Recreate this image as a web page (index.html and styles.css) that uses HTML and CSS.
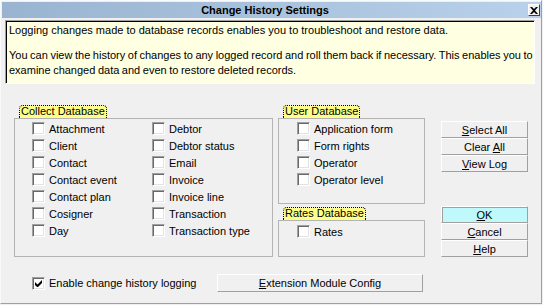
FILE: index.html
```html
<!DOCTYPE html>
<html lang="en">
<head>
    <meta charset="UTF-8">
    <title>Change History Settings</title>
    <link rel="stylesheet" href="styles.css">
</head>
<body>
<div class="window">
    <div class="titlebar">
        <span class="title">Change History Settings</span>
        <span class="close-btn">
            <svg width="8" height="7" viewBox="0 0 8 7">
                <path d="M0 0h2l2 2 2-2h2L5 3.5 8 7H6L4 5 2 7H0l3-3.5z" fill="#000"/>
            </svg>
        </span>
    </div>

    <div class="info">
        <p>Logging changes made to database records enables you to troubleshoot and restore data.</p>
        <p class="tight">You can view the history of changes to any logged record and roll them back if necessary. This enables you to<br>examine changed data and even to restore deleted records.</p>
    </div>

    <div class="main">
        <div class="group">
            <span class="group-tab">Collect Database</span>
            <div class="group-box box-collect">
                <label class="chk"><span class="box"></span>Attachment</label>
                <label class="chk"><span class="box"></span>Client</label>
                <label class="chk"><span class="box"></span>Contact</label>
                <label class="chk"><span class="box"></span>Contact event</label>
                <label class="chk"><span class="box"></span>Contact plan</label>
                <label class="chk"><span class="box"></span>Cosigner</label>
                <label class="chk"><span class="box"></span>Day</label>
                <label class="chk"><span class="box"></span>Debtor</label>
                <label class="chk"><span class="box"></span>Debtor status</label>
                <label class="chk"><span class="box"></span>Email</label>
                <label class="chk"><span class="box"></span>Invoice</label>
                <label class="chk"><span class="box"></span>Invoice line</label>
                <label class="chk"><span class="box"></span>Transaction</label>
                <label class="chk"><span class="box"></span>Transaction type</label>
            </div>
        </div>

        <div class="mid-col">
            <div class="group">
                <span class="group-tab">User Database</span>
                <div class="group-box box-user">
                    <label class="chk"><span class="box"></span>Application form</label>
                    <label class="chk"><span class="box"></span>Form rights</label>
                    <label class="chk"><span class="box"></span>Operator</label>
                    <label class="chk"><span class="box"></span>Operator level</label>
                </div>
            </div>
            <div class="group group-rates">
                <span class="group-tab">Rates Database</span>
                <div class="group-box box-rates">
                    <label class="chk"><span class="box"></span>Rates</label>
                </div>
            </div>
        </div>

        <div class="btn-col">
            <div class="btn-stack">
                <button class="btn"><u>S</u>elect All</button>
                <button class="btn">Clear <u>A</u>ll</button>
                <button class="btn"><u>V</u>iew Log</button>
            </div>
            <div class="btn-stack">
                <button class="btn btn-default"><u>O</u>K</button>
                <button class="btn"><u>C</u>ancel</button>
                <button class="btn"><u>H</u>elp</button>
            </div>
        </div>
    </div>

    <div class="footer">
        <label class="chk chk-enable">
            <span class="box">
                <svg width="7" height="7" viewBox="0 0 7 7">
                    <path d="M0 2v3l2 2h1l4-4V0L2.5 4.5z" fill="#000"/>
                </svg>
            </span>Enable change history logging
        </label>
        <button class="btn btn-ext"><u>E</u>xtension Module Config</button>
    </div>
</div>
</body>
</html>
```

FILE: styles.css
```css
body {
    margin: 0;
    background: #f0f0f0;
    font-family: "Liberation Sans", Arial, sans-serif;
    font-size: 11px;
    color: #000;
}
.window {
    box-sizing: border-box;
    width: 542px;
    height: 304px;
    padding: 1px 0 0 1px;
    background: #f0f0f0;
    border-top: 1px solid #fafafa;
    border-left: 1px solid #fafafa;
    border-right: 1px solid #a0a0a0;
    border-bottom: 1px solid #a0a0a0;
}
.titlebar {
    display: flex;
    align-items: center;
    height: 16px;
    padding-right: 1px;
    background: linear-gradient(to right, #99b4d1, #b9d1ea);
}
.title {
    flex: 1;
    text-align: center;
    font-weight: bold;
    font-size: 11px;
}
.close-btn {
    box-sizing: border-box;
    display: flex;
    align-items: center;
    justify-content: center;
    width: 12px;
    height: 12px;
    background: #f0f0f0;
    border-top: 1px solid #fff;
    border-left: 1px solid #fff;
    border-right: 1px solid #404040;
    border-bottom: 1px solid #404040;
}

/* info panel */
.info {
    box-sizing: border-box;
    width: 530px;
    height: 64px;
    margin: 2px 0 0 3px;
    padding: 2px 0 0 3px;
    overflow: hidden;
    background: #ffffe1;
    border-top: 1px solid #a0a0a0;
    border-left: 1px solid #a0a0a0;
    border-right: 1px solid #fff;
    border-bottom: 1px solid #fff;
    box-shadow: inset 1px 1px 0 #000;
    line-height: 15px;
    white-space: nowrap;
}
.info p {
    margin: 0 0 10px 0;
}
.info .tight {
    word-spacing: -0.5px;
}

/* group layout */
.main {
    display: flex;
    margin-top: 21px;
    padding-left: 12px;
}
.group {
    display: flex;
    flex-direction: column;
}
.group-tab {
    align-self: flex-start;
    box-sizing: border-box;
    height: 13px;
    margin-left: 5px;
    padding: 0 1px;
    line-height: 11px;
    background: #ffff88;
    border: 1px dotted #000;
    border-bottom: none;
    border-radius: 4px 4px 0 0;
}
.group-box {
    box-sizing: border-box;
    border: 1px solid #b4b4b4;
}
.box-collect {
    width: 259px;
    height: 139px;
    padding: 1px 0 0 17px;
    display: grid;
    grid-template-columns: 120px auto;
    grid-template-rows: repeat(7, 17px);
    grid-auto-flow: column;
}
.mid-col {
    display: flex;
    flex-direction: column;
    margin-left: 5px;
}
.box-user {
    width: 147px;
    height: 86px;
    padding: 1px 0 0 18px;
}
.group-rates {
    margin-top: 3px;
}
.box-rates {
    width: 147px;
    height: 37px;
    padding: 2px 0 0 18px;
}

/* checkboxes */
.chk {
    display: flex;
    align-items: center;
    gap: 4px;
    height: 17px;
    white-space: nowrap;
}
.box {
    box-sizing: border-box;
    display: flex;
    align-items: center;
    justify-content: center;
    width: 13px;
    height: 13px;
    background: #fff;
    border-top: 1px solid #a0a0a0;
    border-left: 1px solid #a0a0a0;
    border-right: 1px solid #fff;
    border-bottom: 1px solid #fff;
    box-shadow: inset 1px 1px 0 #696969, inset -1px -1px 0 #e3e3e3;
}

/* buttons */
.btn-col {
    display: flex;
    flex-direction: column;
    gap: 34px;
    margin-left: 16px;
    margin-top: 16px;
}
.btn-stack {
    display: flex;
    flex-direction: column;
}
.btn {
    box-sizing: border-box;
    width: 87px;
    height: 17px;
    padding: 0;
    font-family: inherit;
    font-size: 11px;
    color: #000;
    background: #f0f0f0;
    border-top: 1px solid #fff;
    border-left: 1px solid #fff;
    border-right: 1px solid #a0a0a0;
    border-bottom: 1px solid #a0a0a0;
    border-radius: 0;
}
.btn-default {
    background: #bff9fc;
    border: 1px solid #a0a0a0;
    border-top-color: #fff;
    border-left-color: #fff;
    box-shadow: inset 1px 1px 0 #a0a0a0;
}

/* footer */
.footer {
    display: flex;
    align-items: center;
    margin-top: 17px;
    padding-left: 30px;
}
.chk-enable {
    width: 185px;
}
.btn-ext {
    width: 206px;
    height: 18px;
}
```
